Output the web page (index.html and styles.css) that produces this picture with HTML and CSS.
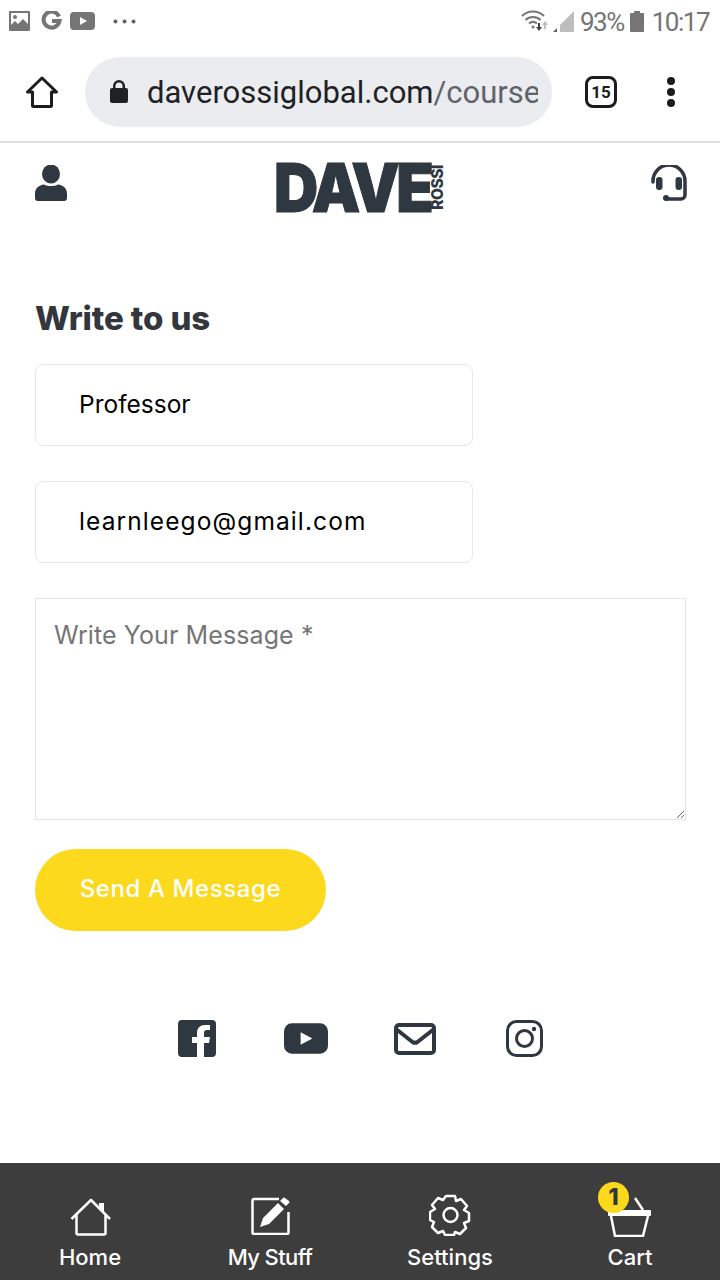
FILE: index.html
```html
<!DOCTYPE html>
<html lang="en">
<head>
  <meta charset="UTF-8">
  <title>Write to us</title>
  <link rel="stylesheet" href="styles.css">
</head>

<body>
  <div class="status-bar">
    <div class="status-left">
      <svg width="21" height="20" viewBox="0 0 21 20"><path fill="#757575" fill-rule="evenodd" d="M1 0h19a1 1 0 0 1 1 1v18a1 1 0 0 1-1 1H1a1 1 0 0 1-1-1V1a1 1 0 0 1 1-1zm1 2v12l4-4 3 3 5-5 5 5V2zM6 4a2 2 0 1 1 0 4 2 2 0 0 1 0-4z"/></svg>
      <svg width="21" height="20" viewBox="0 0 21 20"><path fill="none" stroke="#757575" stroke-width="4" d="M18 5.500A8 8 0 1 0 18.500 10H11"/></svg>
      <svg class="status-yt" width="25" height="18" viewBox="0 0 25 18"><path fill="#757575" fill-rule="evenodd" d="M4 0h17a4 4 0 0 1 4 4v10a4 4 0 0 1-4 4H4a4 4 0 0 1-4-4V4a4 4 0 0 1 4-4zm6 5v8l7-4z"/></svg>
      <svg class="status-dots" width="23" height="5" viewBox="0 0 23 5"><circle cx="2.500" cy="2.500" r="2" fill="#616161"/><circle cx="11.500" cy="2.500" r="2" fill="#616161"/><circle cx="20.500" cy="2.500" r="2" fill="#616161"/></svg>
    </div>
    <div class="status-right">
      <svg class="status-wifi" width="27" height="22" viewBox="0 0 27 22">
        <path fill="none" stroke="#757575" stroke-width="2" d="M1 6c6-6 16-6 22 0M4.500 10c4-4 11-4 15 0M8 13.500c2.500-2 5.500-2 8 0"/>
        <circle cx="12" cy="17" r="1.500" fill="#757575"/>
        <path fill="#424242" d="M17 13h2v4h2l-3 4-3-4h2z"/>
        <path fill="#bdbdbd" d="M24 11l3 4h-2v4h-2v-4h-2z"/>
      </svg>
      <svg class="status-signal" width="21" height="21" viewBox="0 0 21 21"><path fill="#bdbdbd" d="M21 0v21H7V14z"/><path fill="#616161" d="M0 21l4-4v4z"/></svg>
      <span class="status-text">93%</span>
      <svg class="status-battery" width="14" height="21" viewBox="0 0 14 21"><path fill="#757575" d="M4 0h6v2h3a1 1 0 0 1 1 1v17a1 1 0 0 1-1 1H1a1 1 0 0 1-1-1V3a1 1 0 0 1 1-1h3z"/></svg>
      <span class="status-text">10:17</span>
    </div>
  </div>

  <div class="browser-bar">
    <svg class="browser-home" width="32" height="32" viewBox="0 0 32 32"><path fill="none" stroke="#1c1c1c" stroke-width="3" stroke-linejoin="round" d="M1.500 16L16 2l14.500 14H25.500v13.500a1 1 0 0 1-1 1h-17a1 1 0 0 1-1-1V16z"/></svg>
    <div class="url-pill">
      <svg class="url-lock" width="18" height="23" viewBox="0 0 18 23"><path fill="#202124" d="M3 8V6a6 6 0 0 1 12 0v2h1a2 2 0 0 1 2 2v11a2 2 0 0 1-2 2H2a2 2 0 0 1-2-2V10a2 2 0 0 1 2-2zm2.500 0h7V6a3.500 3.500 0 0 0-7 0z"/></svg>
      <div class="url-text">daverossiglobal.com<span class="url-path">/course</span></div>
    </div>
    <div class="tab-count">15</div>
    <div class="browser-menu"><i></i><i></i><i></i></div>
  </div>

  <header class="site-header">
    <svg class="header-user" width="32" height="36" viewBox="0 0 32 36"><ellipse cx="16" cy="9" rx="9" ry="9.500" fill="#2f3740"/><path fill="#2f3740" d="M9 19.500c4 2 10 2 14 0 5 .5 9 4 9 9V33a3 3 0 0 1-3 3H3a3 3 0 0 1-3-3v-4.500c0-5 4-8.500 9-9z"/></svg>
    <div class="logo">
      <span class="logo-main">DAVE</span>
      <span class="logo-side">ROSSI</span>
    </div>
    <svg class="header-support" width="36" height="36" viewBox="0 0 36 36">
      <path fill="none" stroke="#2f3740" stroke-width="3.500" stroke-linecap="round" d="M2 17v-1a16 16 0 0 1 32 0v14a4 4 0 0 1-4 4H16"/>
      <rect x="5" y="12" width="6.500" height="13" rx="3" fill="#2f3740"/>
      <rect x="24.500" y="12" width="6.500" height="13" rx="3" fill="#2f3740"/>
      <circle cx="15" cy="33" r="3" fill="#2f3740"/>
    </svg>
  </header>

  <main class="contact">
    <h2 class="contact-title">Write to us</h2>
    <input class="field" type="text" value="Professor">
    <input class="field field-email" type="text" value="learnleego@gmail.com">
    <textarea class="message" placeholder="Write Your Message *"></textarea>
    <button class="send-button">Send A Message</button>

    <div class="social">
      <svg width="38" height="37" viewBox="0 0 38 37"><path fill="#2f3740" d="M4 0h30a4 4 0 0 1 4 4v29a4 4 0 0 1-4 4h-8V23h5l1-6h-6v-4c0-2 1-3 3-3h3V5h-5c-5 0-8 3-8 8v4h-5v6h5v14H4a4 4 0 0 1-4-4V4a4 4 0 0 1 4-4z"/></svg>
      <svg width="44" height="31" viewBox="0 0 45 31"><path fill="#2f3740" fill-rule="evenodd" d="M8 0h29a8 8 0 0 1 8 8v15a8 8 0 0 1-8 8H8a8 8 0 0 1-8-8V8a8 8 0 0 1 8-8zm9 9v13l12-6.500z"/></svg>
      <svg class="social-mail" width="42" height="32" viewBox="0 0 42 32"><rect x="2" y="2" width="38" height="28" rx="3" fill="none" stroke="#2f3740" stroke-width="4"/><path fill="none" stroke="#2f3740" stroke-width="4" d="M2 6l16.500 13c1.500 1 3.500 1 5 0L40 6"/></svg>
      <svg width="37" height="37" viewBox="0 0 37 37"><rect x="1.500" y="1.500" width="34" height="34" rx="9" fill="none" stroke="#2f3740" stroke-width="3"/><circle cx="18.500" cy="18.500" r="8" fill="none" stroke="#2f3740" stroke-width="3"/><circle cx="28" cy="9" r="2.200" fill="#2f3740"/></svg>
    </div>
  </main>

  <nav class="tabs">
    <div class="tab">
      <svg class="tab-home" width="42" height="38" viewBox="0 0 42 38"><path fill="none" stroke="#fff" stroke-width="2.500" stroke-linejoin="round" d="M1.500 21L21 2l19 19M6.500 17v18a1.500 1.500 0 0 0 1.500 1.500h26a1.500 1.500 0 0 0 1.500-1.500V17"/><path fill="#fff" d="M29 5h5v11l-5-5z"/></svg>
      <span>Home</span>
    </div>
    <div class="tab">
      <svg class="tab-stuff" width="41" height="40" viewBox="0 0 41 40"><path fill="none" stroke="#fff" stroke-width="2.500" stroke-linejoin="round" d="M28 4H3a1.500 1.500 0 0 0-1.500 1.500v32A1.500 1.500 0 0 0 3 39h33a1.500 1.500 0 0 0 1.500-1.500V17"/><path fill="#fff" d="M9 32l3-9L27 8l6 6-15 15zM29 6l3-3q1-1 2 0l4 3q1 1 0 2l-3 3z"/></svg>
      <span class="tab-label-tight">My Stuff</span>
    </div>
    <div class="tab">
      <svg width="43" height="42" viewBox="0 0 43 42"><path fill="none" stroke="#fff" stroke-width="2.500" stroke-linejoin="round" d="M17 2h9l1 5 5-2 6 7-3 4 5 3v8l-5 2 2 5-6 6-5-2-1 3h-9l-2-4-5 2-6-6 2-5-4-2v-8l5-3-3-4 6-7 5 2z"/><circle cx="21.500" cy="21" r="7" fill="none" stroke="#fff" stroke-width="2.500"/></svg>
      <span>Settings</span>
    </div>
    <div class="tab">
      <div class="cart">
        <svg width="44" height="44" viewBox="0 0 44 44"><path fill="none" stroke="#fff" stroke-width="2.500" d="M27 5l8 12"/><rect x="0" y="17" width="43" height="6" rx="1" fill="#fff"/><path fill="none" stroke="#fff" stroke-width="2.500" d="M3 23l4 20h28l5-20"/></svg>
        <span class="cart-badge">1</span>
      </div>
      <span>Cart</span>
    </div>
  </nav>
</body>
</html>
```

FILE: styles.css
```css
body 
{
  margin: 0;
  height: 1280px;
  overflow: hidden;
  display: flex;
  flex-direction: column;
  background-color: white;
  font-family: "Inter", "Liberation Sans", sans-serif;
}
.status-bar 
{
  height: 40px;
  padding: 2px 11px 0 9px;
  display: flex;
  justify-content: space-between;
  align-items: center;
  box-sizing: border-box;
}
.status-left, .status-right 
{
  display: flex;
  align-items: center;
}
.status-left 
{
  gap: 11px;
}
.status-yt 
{
  margin-left: -3px;
}
.status-dots 
{
  margin-left: 7px;
}
.status-wifi 
{
  margin-right: 5px;
}
.status-signal 
{
  margin-right: 6px;
}
.status-battery 
{
  margin: 0 8px 0 6px;
}
.status-text 
{
  font-family: "Roboto", sans-serif;
  font-size: 26px;
  letter-spacing: -1.500px;
  margin-top: 2px;
  color: #757575;
}
.browser-bar 
{
  height: 99px;
  padding-top: 2px;
  border-bottom: 2px solid #e0e0e0;
  display: flex;
  align-items: center;
}
.browser-home 
{
  margin-left: 26px;
  margin-right: 27px;
}
.url-pill 
{
  width: 467px;
  height: 70px;
  border-radius: 35px;
  background-color: #ebecf0;
  display: flex;
  align-items: center;
  box-sizing: border-box;
  padding: 0 14px 0 25px;
}
.url-lock 
{
  flex: none;
  margin-right: 19px;
}
.url-text 
{
  font-family: "Roboto", sans-serif;
  font-size: 31px;
  margin-top: 2px;
  color: #202124;
  white-space: nowrap;
  overflow: hidden;
}
.url-path 
{
  color: #5f6368;
}
.tab-count 
{
  width: 26px;
  height: 26px;
  margin-left: 33px;
  border: 3px solid #1c1c1c;
  border-radius: 8px;
  font-family: "Roboto", sans-serif;
  font-size: 17px;
  font-weight: bold;
  color: #1c1c1c;
  display: flex;
  align-items: center;
  justify-content: center;
}
.browser-menu 
{
  margin-left: 50px;
  display: flex;
  flex-direction: column;
  gap: 3px;
}
.browser-menu i 
{
  width: 8px;
  height: 8px;
  border-radius: 50%;
  background-color: #1c1c1c;
}
.site-header 
{
  height: 70px;
  padding: 19px 33px 0 35px;
  display: flex;
  justify-content: space-between;
  align-items: flex-start;
}
.header-user, .header-support 
{
  margin-top: 3px;
}
.logo 
{
  display: flex;
  align-items: center;
  color: #2f3740;
  height: 50px;
}
.logo-main 
{
  width: 157px;
  font-weight: 900;
  font-size: 68px;
  letter-spacing: -4px;
  line-height: 50px;
  -webkit-text-stroke: 1px #2f3740;
  transform: scaleX(0.9);
  transform-origin: left center;
}
.logo-side 
{
  writing-mode: vertical-rl;
  transform: rotate(180deg);
  font-weight: 800;
  font-size: 15.500px;
  letter-spacing: -0.500px;
  line-height: 12px;
  margin-left: 1px;
}
.contact 
{
  flex: 1;
  padding: 0 34px 0 35px;
  display: flex;
  flex-direction: column;
  align-items: flex-start;
}
.contact-title 
{
  margin: 66px 0 26px 0;
  font-size: 33px;
  font-weight: 800;
  letter-spacing: -0.100px;
  line-height: 40px;
  color: #33373d;
}
.field 
{
  width: 438px;
  height: 82px;
  margin-bottom: 35px;
  padding: 0 0 3px 43px;
  box-sizing: border-box;
  border: 1px solid #e8e8e8;
  border-radius: 8px;
  outline: none;
  font-family: "Inter", sans-serif;
  font-size: 24.500px;
  color: black;
}
.field-email 
{
  letter-spacing: 1.100px;
}
.message 
{
  width: 651px;
  height: 222px;
  padding: 21px 18px 18px 18px;
  box-sizing: border-box;
  border: 1px solid #e4e4e4;
  outline: none;
  font-family: "Inter", sans-serif;
  font-size: 25px;
  letter-spacing: 0.100px;
  display: block;
}
.message::placeholder 
{
  color: #757575;
}
.send-button 
{
  width: 291px;
  height: 82px;
  margin-top: 29px;
  padding: 0 0 4px 0;
  border: none;
  border-radius: 41px;
  background-color: #fcd91c;
  color: white;
  font-family: "Inter", sans-serif;
  font-size: 24px;
  font-weight: 500;
  letter-spacing: 0.600px;
}
.social 
{
  align-self: center;
  display: flex;
  align-items: center;
  gap: 68px;
  margin: 89px 0 0 0;
}
.social-mail 
{
  margin: 0 2px 0 -2px;
}
.tabs 
{
  height: 117px;
  background-color: #3d3d3d;
  display: grid;
  grid-template-columns: repeat(4, 180px);
  color: white;
}
.tab 
{
  height: 117px;
  box-sizing: border-box;
  display: flex;
  flex-direction: column;
  align-items: center;
  justify-content: flex-end;
  padding-bottom: 10px;
  font-size: 22px;
  font-weight: 500;
}
.tab > svg 
{
  margin-bottom: 8px;
}
.tab > .tab-home 
{
  margin-left: 2px;
}
.tab > .tab-stuff 
{
  margin-left: 2px;
  margin-bottom: 9px;
}
.tab-label-tight 
{
  letter-spacing: -0.600px;
}
.cart 
{
  position: relative;
  height: 44px;
  margin-bottom: 7px;
}
.cart-badge 
{
  position: absolute;
  left: -10px;
  top: -11px;
  width: 31px;
  height: 31px;
  border-radius: 50%;
  background-color: #fcd91c;
  color: #2f3740;
  font-size: 23px;
  font-weight: 800;
  text-align: center;
  line-height: 31px;
}
```
